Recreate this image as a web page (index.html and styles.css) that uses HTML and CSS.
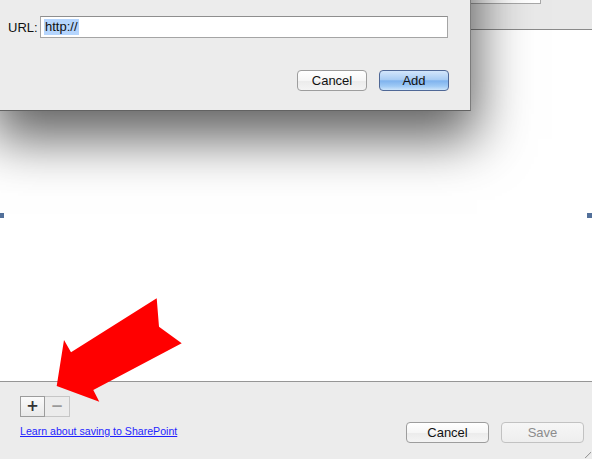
FILE: index.html
```html
<!DOCTYPE html>
<html>
<head>
<meta charset="utf-8">
<link rel="stylesheet" href="styles.css">
</head>
<body>
<div class="window">
  <div class="toolbar">
    <div class="search"></div>
  </div>
  <div class="content">
    <span class="handle handle-left"></span>
    <span class="handle handle-right"></span>
  </div>
  <div class="footer">
    <div class="footer-left">
      <div class="segmented">
        <button class="seg seg-plus">+</button>
        <button class="seg seg-minus">&minus;</button>
      </div>
      <a class="learn" href="#">Learn about saving to SharePoint</a>
    </div>
    <div class="footer-right">
      <button class="btn">Cancel</button>
      <button class="btn btn-disabled">Save</button>
    </div>
    <span class="grip"></span>
  </div>
</div>

<div class="sheet">
  <div class="url-row">
    <label class="url-label">URL:</label>
    <div class="url-input"><span class="sel">http://</span></div>
  </div>
  <div class="sheet-buttons">
    <button class="btn">Cancel</button>
    <button class="btn btn-default">Add</button>
  </div>
</div>

<svg class="arrow" width="592" height="459" viewBox="0 0 592 459">
  <polygon fill="#ff0000" points="56.7,386 64,340 71,352.3 156.7,298.3 159,326.7 181.7,343.3 93.3,390 99.3,401.7"/>
</svg>
</body>
</html>
```

FILE: styles.css
```css
html, body {
  margin: 0;
  padding: 0;
  width: 592px;
  height: 459px;
  overflow: hidden;
  background: #ffffff;
  font-family: "Liberation Sans", Arial, sans-serif;
}

.window {
  position: relative;
  width: 592px;
  height: 459px;
  display: flex;
  flex-direction: column;
}

.toolbar {
  height: 29px;
  background: #e9e9e9;
  border-bottom: 1px solid #8a8a8a;
  position: relative;
  flex: none;
}

.search {
  position: absolute;
  left: 470px;
  top: -20px;
  width: 69px;
  height: 22px;
  background: #ffffff;
  border: 1px solid #a8a8a8;
}

.content {
  flex: 1;
  background: #ffffff;
  position: relative;
}

.handle {
  position: absolute;
  top: 183px;
  width: 5px;
  height: 5px;
  background: #52709a;
}
.handle-left { left: -1px; }
.handle-right { right: 0; }

.footer {
  height: 78px;
  flex: none;
  background: #ececec;
  border-top: 1px solid #969696;
  display: flex;
  justify-content: space-between;
  align-items: flex-start;
  padding: 14px 8px 0 20px;
  box-sizing: border-box;
  position: relative;
}

.footer-left {
  display: flex;
  flex-direction: column;
  align-items: flex-start;
}

.segmented {
  display: flex;
  height: 21px;
}

.seg {
  width: 25px;
  height: 21px;
  margin: 0;
  padding: 0;
  font-family: "DejaVu Sans", sans-serif;
  font-size: 15px;
  font-weight: bold;
  line-height: 19px;
  box-sizing: border-box;
}

.seg-plus {
  color: #333333;
  background: linear-gradient(#fbfbfb, #e9e9e9);
  border: 1px solid #9c9c9c;
}

.seg-minus {
  width: 25px;
  color: #9a9a9a;
  background: #ececec;
  border: 1px solid #c6c6c6;
  border-left: none;
}

.learn {
  margin-top: 8px;
  font-size: 10.6px;
  line-height: 13px;
  color: #1f1fff;
  text-decoration: underline;
}

.footer-right {
  display: flex;
  gap: 12px;
  margin-top: 26px;
}

.btn {
  width: 83px;
  height: 21px;
  margin: 0;
  padding: 0;
  box-sizing: border-box;
  font-family: "Liberation Sans", Arial, sans-serif;
  font-size: 13px;
  line-height: 19px;
  color: #111111;
  background: linear-gradient(#ffffff 0%, #f6f6f6 50%, #ebebeb 51%, #f4f4f4 100%);
  border: 1px solid #9d9d9d;
  border-radius: 4px;
}

.btn-disabled {
  color: #8c8c8c;
  border-color: #c2c2c2;
  background: linear-gradient(#f6f6f6, #eeeeee);
}

.grip {
  position: absolute;
  right: 1px;
  bottom: 1px;
  width: 6px;
  height: 6px;
  background: linear-gradient(135deg, transparent 45%, #9a9a9a 50%, transparent 60%);
}

.sheet {
  position: absolute;
  left: -1px;
  top: -100px;
  width: 472px;
  height: 211px;
  box-sizing: border-box;
  background: #ececec;
  border-right: 1px solid #7c7c7c;
  border-bottom: 1px solid #626262;
  box-shadow: 0 22px 50px 6px rgba(0, 0, 0, 0.62);
  padding: 116px 21px 0 9px;
  display: flex;
  flex-direction: column;
}

.url-row {
  display: flex;
  align-items: center;
  gap: 5px;
  height: 22px;
}

.url-label {
  font-size: 13px;
  color: #111111;
  width: 27px;
}

.url-input {
  width: 408px;
  height: 22px;
  box-sizing: border-box;
  background: #ffffff;
  border: 1px solid #a5a5a5;
  border-top-color: #8e8e8e;
  padding: 2px 0 0 3px;
  font-size: 13px;
  line-height: 16px;
  color: #111111;
}

.sel {
  background: #b5d5fd;
  display: inline-block;
  padding: 0 1px;
}

.sheet-buttons {
  display: flex;
  justify-content: flex-end;
  gap: 12px;
  margin-top: 32px;
}

.sheet-buttons .btn {
  width: 70px;
}

.btn-default {
  border-color: #4f6896;
  background: linear-gradient(#d3e6fb 0%, #a9cdf4 45%, #7fb3ee 52%, #9fcaf5 80%, #cde5fb 100%);
}

.arrow {
  position: absolute;
  left: 0;
  top: 0;
  pointer-events: none;
}
```
